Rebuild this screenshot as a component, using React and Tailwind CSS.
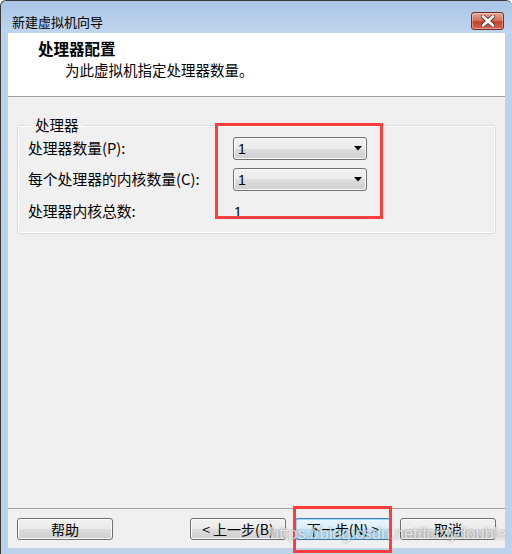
import React from 'react';

const cjk = { fontFamily: '"Noto Sans CJK SC", "Noto Sans", sans-serif' };

const btnBg =
  'bg-[linear-gradient(#f2f2f2_0%,#ebebeb_50%,#dddddd_50%,#cfcfcf_100%)]';

const Combo = ({ value }) => (
  <div
    className={`w-[134px] h-[23px] rounded-[3px] border border-[#707070] ${btnBg} flex items-center justify-between pl-[4px] pr-[4px] shadow-[inset_0_0_0_1px_#fcfcfc]`}
  >
    <span className="text-[14px] leading-none text-black" style={{ fontFamily: '"Liberation Sans", Arial, sans-serif' }}>
      {value}
    </span>
    <svg width="8" height="5" viewBox="0 0 8 5">
      <path d="M0 0 H8 L4 4.5 Z" fill="#000" />
    </svg>
  </div>
);

const Button = ({ children, focused }) => (
  <button
    className={`w-[96px] h-[22px] rounded-[3px] border ${
      focused
        ? 'border-[#3c7fb1] shadow-[inset_0_0_0_1px_#9fd9f7] bg-[linear-gradient(#eaf6fd_0%,#d9f0fc_50%,#bee6fd_50%,#a7d9f5_100%)]'
        : `border-[#707070] shadow-[inset_0_0_0_1px_#fbfbfb] ${btnBg}`
    } flex items-center justify-center text-[14px] leading-none text-black whitespace-nowrap`}
    style={cjk}
  >
    {children}
  </button>
);

const CloseIcon = () => (
  <div className="w-[33px] h-[18px] rounded-[3px] border border-[#6d2f26] bg-[linear-gradient(#e8a493_0%,#d8735e_45%,#c4402a_55%,#d5664f_100%)] flex items-center justify-center shadow-[inset_0_0_0_1px_rgba(255,255,255,0.35)]">
    <svg width="14" height="12" viewBox="0 0 14 12">
      <path d="M2 1.5 L12 10.5 M12 1.5 L2 10.5" stroke="#5a3a36" strokeWidth="4.4" strokeLinecap="round" />
      <path d="M2 1.5 L12 10.5 M12 1.5 L2 10.5" stroke="#ffffff" strokeWidth="2.6" strokeLinecap="round" />
    </svg>
  </div>
);

export default function App() {
  return (
    <div className="relative w-[512px] h-[554px] overflow-hidden bg-white" style={cjk}>
      <div className="w-full h-full flex flex-col bg-[#bdd3ec] border-l border-t border-[#3a3a3a] rounded-tl-[6px] rounded-tr-[6px]">
        {/* title bar */}
        <div className="h-[32px] pt-[8px] bg-[linear-gradient(#a9c5e6,#c0d6ee)] rounded-tl-[6px] rounded-tr-[6px]">
          <div className="h-[24px] flex items-center justify-between pl-[11px] pr-[8px]">
            <span className="text-[13px] text-black leading-none">新建虚拟机向导</span>
            <CloseIcon />
          </div>
        </div>

        {/* client area */}
        <div className="flex-1 flex flex-col ml-[7px] mr-[7px] mb-[6px] bg-[#f0f0f0]">
          <div className="h-[64px] bg-white border-b border-[#a0a0a0] pt-[5px]">
            <div className="pl-[30px] text-[15.5px] leading-[20px] font-bold text-black">处理器配置</div>
            <div className="pl-[57px] mt-[2px] text-[14.5px] leading-[20px] text-black">为此虚拟机指定处理器数量。</div>
          </div>

          <div className="flex-1 px-[9px] pt-[20px]">
            <fieldset className="border border-[#d5dfe5] rounded-[3px] px-[10px] pt-[4px] pb-[9px] shadow-[inset_0_0_0_1px_#ffffff]">
              <legend className="ml-[3px] px-[4px] text-[14.5px] leading-[16px] text-black">处理器</legend>
              <div className="grid grid-cols-[205px_1fr] gap-y-[8px] items-center text-[14.8px] text-black">
                <span className="leading-none">处理器数量(P):</span>
                <Combo value="1" />
                <span className="leading-none">每个处理器的内核数量(C):</span>
                <Combo value="1" />
                <span className="leading-none h-[23px] pt-[3px] mt-[2px]">处理器内核总数:</span>
                <span
                  className="h-[23px] pt-[4px] mt-[2px] pl-[1px] text-[14px] leading-none"
                  style={{ fontFamily: '"Liberation Sans", Arial, sans-serif' }}
                >
                  1
                </span>
              </div>
            </fieldset>
          </div>

          <div className="h-[40px] border-t border-[#a0a0a0] flex items-start pt-[9px] px-[9px]">
            <Button>帮助</Button>
            <div className="flex-1" />
            <div className="flex gap-[9px]">
              <Button>&lt; 上一步(B)</Button>
              <Button focused>下一步(N) &gt;</Button>
              <Button>取消</Button>
            </div>
          </div>
        </div>
      </div>

      {/* annotations over the screenshot */}
      <div className="absolute left-[215px] top-[123px] w-[168px] h-[96px] border-[3px] border-[#ff3d3d]" />
      <div className="absolute left-[293px] top-[506px] w-[99px] h-[47px] border-[3px] border-[#ff3d3d]" />
      <div
        className="absolute left-[270px] top-[523px] text-[16.5px] leading-[20px] text-white/75 [text-shadow:0_0_2px_rgba(60,60,60,0.6)]"
        style={{ fontFamily: '"Liberation Sans", Arial, sans-serif' }}
      >
        https://blog.csdn.net/fcrzydouble
      </div>
    </div>
  );
}
